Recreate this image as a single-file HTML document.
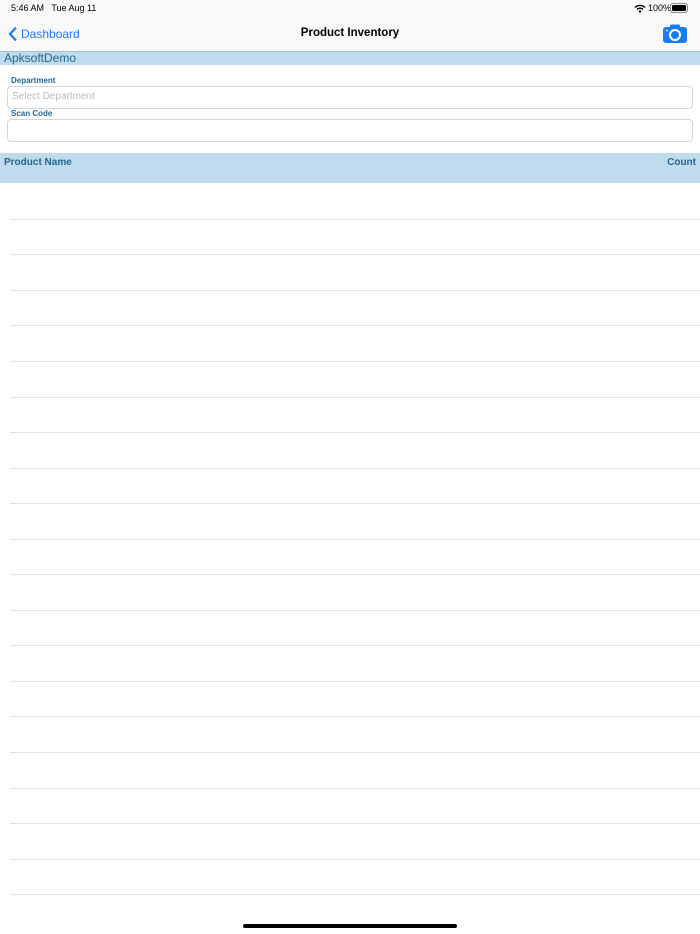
<!DOCTYPE html><html><head><style>
body{margin:0;width:700px;height:934px;background:#fff;font-family:"Liberation Sans",sans-serif;position:relative;overflow:hidden}
.a{position:absolute}
.line{position:absolute;left:10px;right:0;height:1px;background:#e2e2e2}
</style></head><body>
<div class="a" style="left:0;top:0;width:700px;height:51px;background:#f8f8f8"></div>
<div class="a" style="left:11px;top:3px;font-size:9px;color:#000">5:46 AM&nbsp;&nbsp; Tue Aug 11</div>
<div class="a" style="left:648px;top:3px;font-size:9px;color:#000">100%</div>
<svg class="a" style="left:634px;top:4px" width="12" height="9" viewBox="0 0 12 9"><path d="M1 3.5a7 7 0 0 1 10 0M3 5.5a4 4 0 0 1 6 0" stroke="#000" stroke-width="1.4" fill="none"/><circle cx="6" cy="7.5" r="1.2"/></svg>
<div class="a" style="left:672px;top:5px;width:14px;height:6px;background:#000;border-radius:1.5px;outline:1px solid #888;outline-offset:1px"></div>
<svg class="a" style="left:8px;top:26px" width="10" height="16" viewBox="0 0 10 16"><path d="M8 1.5 2 8l6 6.5" stroke="#1a7cf5" stroke-width="2.2" fill="none"/></svg>
<div class="a" style="left:21px;top:27px;font-size:12px;color:#1a7cf5">Dashboard</div>
<div class="a" style="left:0;width:700px;top:27px;text-align:center;font-size:11.5px;font-weight:bold">Product Inventory</div>
<svg class="a" style="left:663px;top:24px" width="24" height="19" viewBox="0 0 24 19"><rect x="0" y="3" width="24" height="16" rx="3" fill="#1a7cf5"/><rect x="7" y="0.5" width="10" height="5" rx="1.5" fill="#1a7cf5"/><circle cx="12" cy="11" r="5" fill="none" stroke="#fff" stroke-width="2"/><circle cx="4" cy="6.5" r="0.9" fill="#fff"/></svg>
<div class="a" style="left:0;top:51px;width:700px;height:14px;background:#bfdbed;border-top:1px solid #a9bfcd;box-sizing:border-box"></div>
<div class="a" style="left:4px;top:51px;font-size:12px;color:#21678f">ApksoftDemo</div>
<div class="a" style="left:11px;top:76px;font-size:8px;font-weight:bold;color:#21678f">Department</div>
<div class="a" style="left:7px;top:86px;width:686px;height:23px;border:1px solid #d6d6d6;border-radius:4px;box-sizing:border-box"></div>
<div class="a" style="left:12px;top:91px;font-size:10px;color:#bbb">Select Department</div>
<div class="a" style="left:11px;top:109px;font-size:8px;font-weight:bold;color:#21678f">Scan Code</div>
<div class="a" style="left:7px;top:119px;width:686px;height:23px;border:1px solid #d6d6d6;border-radius:4px;box-sizing:border-box"></div>
<div class="a" style="left:0;top:153px;width:700px;height:30px;background:#bfdbed"></div>
<div class="a" style="left:4px;top:157px;font-size:10px;font-weight:bold;color:#21678f">Product Name</div>
<div class="a" style="right:4px;top:157px;font-size:10px;font-weight:bold;color:#21678f">Count</div>
<div class="line" style="top:219px"></div><div class="line" style="top:254px"></div><div class="line" style="top:290px"></div><div class="line" style="top:325px"></div><div class="line" style="top:361px"></div><div class="line" style="top:397px"></div><div class="line" style="top:432px"></div><div class="line" style="top:468px"></div><div class="line" style="top:503px"></div><div class="line" style="top:539px"></div><div class="line" style="top:574px"></div><div class="line" style="top:610px"></div><div class="line" style="top:645px"></div><div class="line" style="top:681px"></div><div class="line" style="top:716px"></div><div class="line" style="top:752px"></div><div class="line" style="top:788px"></div><div class="line" style="top:823px"></div><div class="line" style="top:859px"></div><div class="line" style="top:894px"></div>
<div class="a" style="left:243px;top:924px;width:214px;height:4px;border-radius:2px;background:#000"></div>
</body></html>
